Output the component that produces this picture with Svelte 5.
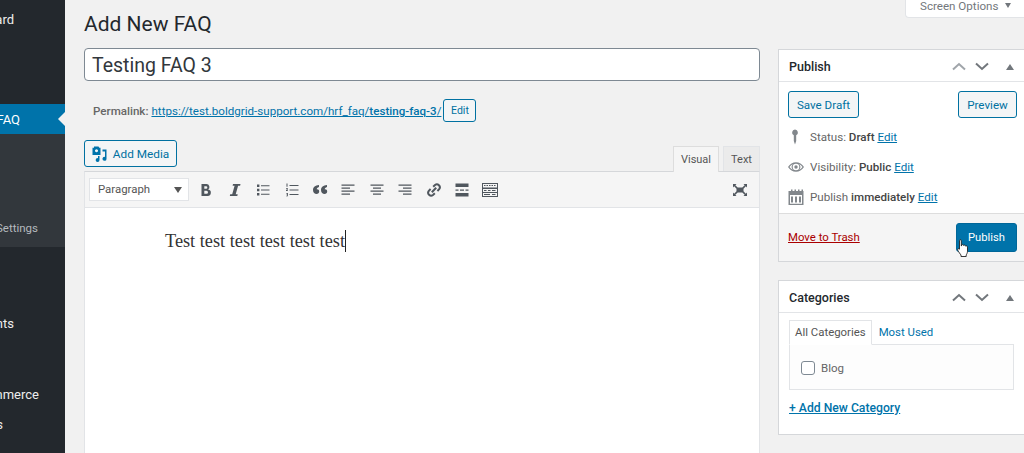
<script>
  // Icônes de la barre d'outils de l'éditeur
  const gras = 'M3.500 2h5a3 3 0 0 1 1.600 5.500 3.200 3.200 0 0 1-1.100 6.500H3.500zM6.300 4.200v2.500h1.800a1.250 1.250 0 0 0 0-2.500zM6.300 8.800v3h2.200a1.500 1.500 0 0 0 0-3z';
  const italique = 'M6 2h7.500l-.4 1.700h-2L8.700 12.300h2L10.300 14H2.800l.4-1.700h2L7.600 3.700h-2z';
</script>

<div class="page">
  <nav class="sidebar">
    <div class="item dash">Dashboard</div>
    <div class="item actif">FAQ<span class="fleche"></span></div>
    <div class="sous">
      <div class="item reglages">Settings</div>
    </div>
    <div class="item comments">Comments</div>
    <div class="item woo">WooCommerce</div>
    <div class="item produits">Products</div>
  </nav>

  <main class="contenu">
    <div class="colonne">
      <h1>Add New FAQ</h1>
      <div class="titre">Testing FAQ 3</div>
      <div class="permalien">
        <strong>Permalink:</strong>
        <a href="#p">https://test.boldgrid-support.com/hrf_faq/<b>testing-faq-3</b>/</a>
        <button class="btn petit">Edit</button>
      </div>
      <div class="barre-media">
        <button class="btn media">
          <svg width="15" height="16" viewBox="0 0 15 16"><path fill="#0073aa" fill-rule="evenodd" d="M2 .5h4.500l.8 1.200h1.200v7.300H.5V1.700H2zM4.500 3.300a1.500 1.500 0 1 0 .01 0zM10.500 3.500h4v9.300a2 2 0 1 1-1.500-1.900V5.500h-2.500zM7.500 10v4a1.900 1.900 0 1 1-1.500-1.800V10z"/></svg>
          Add Media
        </button>
        <div class="onglets">
          <span class="onglet on">Visual</span>
          <span class="onglet autre">Text</span>
        </div>
      </div>
      <div class="editeur">
        <div class="outils">
          <div class="select">Paragraph<i></i></div>
          <svg class="ico premier" viewBox="0 0 16 16"><path d={gras} fill-rule="evenodd"/></svg>
          <svg class="ico" viewBox="0 0 16 16"><path d={italique}/></svg>
          <svg class="ico" viewBox="0 0 16 16"><path d="M2 2.500h2.400v2.400H2zM2 6.800h2.400v2.400H2zM2 11.100h2.400v2.400H2zM6 3.200h8.500v1H6zM6 7.500h8.500v1H6zM6 11.800h8.500v1H6z"/></svg>
          <svg class="ico" viewBox="0 0 16 16"><path d="M5.500 3h9v.900h-9zM5.500 7.500h9v.900h-9zM5.500 12h9v.900h-9zM2.500 1.500h1v3.200h-1zM2 6.300h2v.7l-1 1.200h1v.7H2v-.7l1.100-1.200H2zM2 11h2v3.300H2v-.6h1.200v-.7H2.500v-.6h.7v-.8H2z"/></svg>
          <svg class="ico" viewBox="0 0 16 16"><path d="M7 3v1.900C5.400 5.300 4.700 6.300 4.700 7.300c1.400-.2 2.500.7 2.500 2.200 0 1.400-1.100 2.500-2.600 2.500C2.700 12 1 10.600 1 8c0-2.900 2.300-4.800 6-5zM15 3v1.900c-1.600.4-2.300 1.400-2.300 2.400 1.400-.2 2.500.7 2.500 2.200 0 1.400-1.100 2.500-2.600 2.500-1.900 0-3.600-1.400-3.600-4 0-2.900 2.300-4.800 6-5z"/></svg>
          <svg class="ico" viewBox="0 0 16 16"><path d="M1.500 2.500h13v1.300h-13zM1.500 5.500h8.500v1.300H1.500zM1.500 8.500h13v1.300h-13zM1.500 11.500h8.500v1.300H1.500z"/></svg>
          <svg class="ico" viewBox="0 0 16 16"><path d="M1.500 2.500h13v1.300h-13zM4 5.500h8v1.300H4zM1.500 8.500h13v1.300h-13zM4 11.500h8v1.300H4z"/></svg>
          <svg class="ico" viewBox="0 0 16 16"><path d="M1.500 2.500h13v1.300h-13zM6 5.500h8.500v1.300H6zM1.500 8.500h13v1.300h-13zM6 11.500h8.500v1.300H6z"/></svg>
          <svg class="ico trait" viewBox="0 0 16 16"><path d="M5.800 10.200l4.400-4.400"/><path d="M7.200 4.800L9 3a3 3 0 0 1 4.200 4.200L11.400 9"/><path d="M8.800 11.200L7 13a3 3 0 0 1-4.200-4.200L4.600 7"/></svg>
          <svg class="ico" viewBox="0 0 16 16"><path d="M1.500 1.500h13v3.500h-13zM1.500 11h13v3.500h-13zM1.500 7.500h3v1.200h-3zM6 7.500h4v1.200H6zM11.500 7.500h3v1.200h-3z"/></svg>
          <svg class="ico large" viewBox="0 0 18 16"><path fill-rule="evenodd" d="M1 1h16v14H1zM2 2v3.500h14V2zM2 7v3h14V7zM2 11v3h14v-3zM3 3h1.500v1H3zM5.500 3H7v1H5.500zM8 3h1.500v1H8zM10.500 3H12v1h-1.500zM13 3h1.500v1H13zM3 8h2.500v1H3zM7 8h2.500v1H7zM11 8h3.500v1H11zM3 12h6v1H3zM11 12h3.500v1H11z"/></svg>
          <svg class="ico plein" viewBox="0 0 16 16"><path d="M1 2h3.500L3.300 3.200 5.700 5.500h4.600l2.400-2.300L11.500 2H15v3.500l-1.200-1.200-2.300 2.400v2.600l2.300 2.400L15 10.500V14h-3.500l1.200-1.200-2.400-2.300H5.700l-2.400 2.300L4.500 14H1v-3.500l1.200 1.200 2.300-2.400V6.700L2.200 4.300 1 5.500z"/></svg>
        </div>
        <div class="texte"><span>Test test test test test test</span><i class="caret"></i></div>
      </div>
    </div>

    <aside class="droite">
      <div class="options">Screen Options <i></i></div>
      <section class="boite publier">
        <header>
          <h2>Publish</h2>
          <svg class="chev" viewBox="0 0 14 9"><path d="M1 7.500l6-5.500 6 5.500" class="gris"/></svg>
          <svg class="chev" viewBox="0 0 14 9"><path d="M1 1.500l6 5.500 6-5.500"/></svg>
          <i class="replier"></i>
        </header>
        <div class="actions">
          <button class="btn">Save Draft</button>
          <button class="btn">Preview</button>
        </div>
        <div class="ligne">
          <svg width="16" height="18" viewBox="0 0 16 18"><path fill="#82878c" d="M7 1.500a3 3 0 0 1 1.200 5.700V13L7 16.500 5.800 13V7.200A3 3 0 0 1 7 1.500z"/></svg>
          <span>Status: <b>Draft</b> <a href="#s">Edit</a></span>
        </div>
        <div class="ligne">
          <svg width="16" height="18" viewBox="0 0 16 18"><path fill="#82878c" fill-rule="evenodd" d="M0 9c2-3.200 4.800-4.800 8-4.800S14 5.800 16 9c-2 3.200-4.800 4.800-8 4.800S2 12.200 0 9zm8-3.300a3.300 3.300 0 1 0 0 6.600 3.300 3.300 0 0 0 0-6.600zM1.500 9c1 1.300 2.100 2.300 3.400 3a4.500 4.500 0 0 1 0-6C3.600 6.700 2.500 7.700 1.500 9zm13 0c-1-1.300-2.100-2.300-3.400-3a4.500 4.500 0 0 1 0 6c1.300-.7 2.400-1.700 3.400-3z"/><circle cx="8" cy="9" r="1.700" fill="#82878c"/></svg>
          <span>Visibility: <b>Public</b> <a href="#v">Edit</a></span>
        </div>
        <div class="ligne">
          <svg width="16" height="18" viewBox="0 0 16 18"><path fill="#82878c" fill-rule="evenodd" d="M1 3h2V1.500h1.500V3h2V1.500H8V3h2V1.500h1.500V3h2V1.500H15V3h.5v14H.5V3zM2 7v8.800h12V7zM3 8.500h2v6H3zM7 8.500h2v6H7zM11 8.500h2v6h-2z"/></svg>
          <span>Publish <b>immediately</b> <a href="#i">Edit</a></span>
        </div>
        <footer>
          <a class="corbeille" href="#t">Move to Trash</a>
          <button class="btn primaire">Publish</button>
          <svg class="main" width="15" height="20" viewBox="0 0 15 20"><path fill="#fff" stroke="#222" stroke-width=".9" d="M4 1.500c.8 0 1.300.6 1.300 1.300V8l.3-.1V6.800c.9-.6 1.900-.3 2 .6.800-.6 1.800-.3 2 .7.900-.5 1.900-.1 1.900 1v4.100c0 1.800-.9 3-1.300 3.800v1.500H5v-1.500c-.8-1-2.300-2.900-3.200-4.700-.6-1.100.4-2.100 1.400-1.400l.3.300V2.800c0-.7.500-1.300.5-1.300z"/></svg>
        </footer>
      </section>

      <section class="boite categories">
        <header>
          <h2>Categories</h2>
          <svg class="chev" viewBox="0 0 14 9"><path d="M1 7.500l6-5.500 6 5.500"/></svg>
          <svg class="chev" viewBox="0 0 14 9"><path d="M1 1.500l6 5.500 6-5.500"/></svg>
          <i class="replier"></i>
        </header>
        <div class="corps">
          <div class="cat-onglets">
            <span class="cat-on">All Categories</span>
            <a href="#m">Most Used</a>
          </div>
          <div class="cat-liste">
            <label><span class="coche"></span>Blog</label>
          </div>
          <a class="ajout" href="#n">+ Add New Category</a>
        </div>
      </section>
    </aside>
  </main>
</div>

<style>
  :global(body) {
    margin: 0;
    background: #f1f1f1;
  }

  .page {
    display: flex;
    width: 1024px;
    height: 453px;
    overflow: hidden;
    font-family: Roboto, "Open Sans", sans-serif;
    color: #444;
    font-size: 12px;
  }

  a { color: #0073aa; }

  /* === Barre latérale === */
  .sidebar {
    flex: 0 0 65px;
    background: #23282d;
    color: #eee;
    overflow: hidden;
    display: flex;
    flex-direction: column;
  }
  .item {
    display: flex;
    justify-content: flex-end;
    align-items: center;
    white-space: nowrap;
    height: 30px;
    font-size: 13px;
    position: relative;
  }
  .dash { margin-top: 4px; padding-right: 51px; }
  .actif {
    margin-top: 70px;
    background: #0073aa;
    color: #fff;
    padding-right: 45px;
  }
  .fleche {
    position: absolute;
    right: 0;
    top: 8px;
    border: 7px solid transparent;
    border-right-color: #f1f1f1;
    border-left-width: 0;
  }
  .sous {
    background: #32373c;
    height: 113px;
    display: flex;
    flex-direction: column;
    padding-top: 79px;
    box-sizing: border-box;
    color: #b4b9be;
  }
  .reglages { padding-right: 27px; height: 30px; font-size: 11.500px; }
  .comments { margin-top: 61px; padding-right: 51px; }
  .woo { margin-top: 41px; padding-right: 26px; }
  .produits { margin-top: 0; padding-right: 62px; }

  /* === Colonne principale === */
  .contenu {
    flex: 1;
    display: flex;
    padding-left: 19px;
    min-width: 0;
  }
  .colonne {
    width: 676px;
    flex: none;
  }
  h1 {
    margin: 11px 0 0;
    font-size: 21px;
    font-weight: 400;
    line-height: 27px;
    color: #23282d;
  }
  .titre {
    margin-top: 10px;
    height: 33px;
    box-sizing: border-box;
    border: 1px solid #7e8993;
    border-radius: 4px;
    background: #fff;
    padding: 2px 0 0 7px;
    font-size: 19.500px;
    line-height: 29px;
    color: #32373c;
  }
  .permalien {
    margin-top: 18px;
    padding-left: 9px;
    display: flex;
    align-items: center;
    gap: 3px;
    height: 23px;
    font-size: 11.600px;
    color: #666;
  }
  .permalien strong { font-weight: 500; }
  .permalien b { font-weight: 500; }
  .btn {
    font-family: inherit;
    font-size: 11.600px;
    color: #0071a1;
    background: #f3f5f6;
    border: 1px solid #0071a1;
    border-radius: 3px;
    padding: 0;
    display: inline-flex;
    align-items: center;
    justify-content: center;
    box-sizing: border-box;
  }
  .petit { width: 33px; height: 23px; font-size: 10.500px; margin-left: -1px; }
  .barre-media {
    margin-top: 18px;
    display: flex;
    justify-content: space-between;
    align-items: flex-end;
    height: 31px;
  }
  .media {
    width: 93px;
    height: 27px;
    gap: 6px;
    margin-bottom: 4px;
    font-size: 11.800px;
  }
  .onglets { display: flex; gap: 4px; position: relative; }
  .onglet {
    height: 25px;
    box-sizing: border-box;
    border: 1px solid #e2e4e7;
    border-bottom: none;
    background: #ebebeb;
    line-height: 25px;
    font-size: 11px;
    color: #555;
    text-align: center;
  }
  .onglet.on {
    background: #f5f5f5;
    border-color: #ddd;
    width: 46px;
    height: 26px;
    margin-bottom: -1px;
  }
  .onglet.autre { width: 37px; }
  .editeur {
    border: 1px solid #e2e4e7;
    border-top-color: #d5d7da;
    background: #fff;
    height: 300px;
  }
  .outils {
    height: 36px;
    box-sizing: border-box;
    background: #f5f5f5;
    border-bottom: 1px solid #e2e4e7;
    display: flex;
    align-items: center;
    padding-left: 4px;
    gap: 12.400px;
  }
  .select {
    width: 100px;
    height: 23px;
    box-sizing: border-box;
    background: #fff;
    border: 1px solid #e2e4e7;
    padding-left: 8px;
    line-height: 21px;
    font-size: 11.400px;
    color: #555;
    position: relative;
  }
  .select i {
    position: absolute;
    right: 6px;
    top: 8px;
    border: 4px solid transparent;
    border-top: 6px solid #555;
    border-bottom: none;
  }
  .ico {
    width: 16px;
    height: 16px;
    fill: #50575e;
    flex: none;
  }
  .ico.premier { margin-left: -3px; }
  .ico.trait { fill: none; stroke: #50575e; stroke-width: 2; }
  .ico.large { width: 18px; margin-left: -1px; }
  .plein { margin-left: auto; margin-right: 11px; }
  .texte {
    padding: 22px 0 0 80px;
    font-family: "Liberation Serif", serif;
    font-size: 18.300px;
    line-height: 22px;
    color: #333;
    display: flex;
  }
  .caret {
    width: 1px;
    height: 22px;
    background: #222;
  }

  /* === Colonne droite === */
  .droite {
    width: 246px;
    flex: none;
    margin-left: 18px;
    position: relative;
    padding-top: 49px;
    display: flex;
    flex-direction: column;
    gap: 18px;
  }
  .options {
    position: absolute;
    top: 0;
    left: 127px;
    width: 140px;
    height: 18px;
    box-sizing: border-box;
    background: #fff;
    border: 1px solid #e2e4e7;
    border-top: none;
    border-radius: 0 0 0 4px;
    padding-left: 14px;
    font-size: 11.600px;
    line-height: 12px;
    color: #72777c;
  }
  .options i {
    display: inline-block;
    margin-left: 4px;
    border: 3.500px solid transparent;
    border-top: 5px solid #72777c;
    border-bottom: none;
    vertical-align: 2px;
  }
  .boite {
    background: #fff;
    border: 1px solid #d5d7da;
    border-right: none;
    box-sizing: border-box;
  }
  .boite header {
    height: 32px;
    box-sizing: border-box;
    border-bottom: 1px solid #e2e4e7;
    display: flex;
    align-items: center;
    padding: 2px 0 0 10px;
  }
  h2 {
    flex: 1;
    margin: 0;
    font-size: 12.500px;
    font-weight: 500;
    color: #23282d;
  }
  .chev {
    width: 14px;
    height: 9px;
    fill: none;
    margin-right: 9px;
  }
  .chev path { stroke: #72777c; stroke-width: 2; }
  .chev path.gris { stroke: #a0a5aa; }
  .replier {
    margin: 0 10px 0 8px;
    border: 4px solid transparent;
    border-bottom: 6px solid #72777c;
    border-top: none;
  }
  .publier { height: 213px; display: flex; flex-direction: column; }
  .actions {
    display: flex;
    justify-content: space-between;
    padding: 9px 7px 4px 9px;
    height: 27px;
    flex: none;
  }
  .actions .btn { height: 27px; width: 71px; }
  .actions .btn:last-child { width: 59px; }
  .ligne {
    display: flex;
    align-items: center;
    flex: none;
    height: 30px;
    padding-left: 9px;
    gap: 6px;
    font-size: 11.600px;
    color: #666;
  }
  .ligne b { font-weight: 500; color: #444; }
  footer {
    margin-top: auto;
    height: 48px;
    flex: none;
    box-sizing: border-box;
    background: #f5f5f5;
    border-top: 1px solid #ddd;
    display: flex;
    justify-content: space-between;
    align-items: center;
    padding: 0 7px 0 9px;
    position: relative;
  }
  .corbeille { color: #a00; font-size: 11.400px; margin-bottom: 2px; }
  .primaire {
    width: 61px;
    height: 29px;
    background: #0073aa;
    border-color: #006799;
    color: #fff;
    font-size: 11.200px;
  }
  .main {
    position: absolute;
    left: 177px;
    top: 24px;
  }
  .categories { height: 155px; }
  .corps { padding: 7px 10px 0; }
  .cat-onglets {
    display: flex;
    align-items: flex-end;
    height: 25px;
    font-size: 11.400px;
    position: relative;
    z-index: 1;
  }
  .cat-onglets a { text-decoration: none; margin-left: 7px; line-height: 25px; }
  .cat-on {
    border: 1px solid #e2e4e7;
    border-bottom: 1px solid #fff;
    padding: 0 5px;
    line-height: 23px;
    color: #555;
  }
  .cat-liste {
    border: 1px solid #e2e4e7;
    background: #fdfdfd;
    height: 46px;
    box-sizing: border-box;
    margin: -1px 0 0;
    width: 225px;
    display: flex;
    align-items: center;
    padding: 2px 0 0 11px;
    font-size: 11.500px;
    color: #666;
  }
  .cat-liste label { display: flex; align-items: center; gap: 6px; }
  .coche {
    width: 12px;
    height: 12px;
    border: 1px solid #7e8993;
    border-radius: 3px;
    background: #fff;
    display: inline-block;
  }
  .ajout {
    display: block;
    margin-top: 11px;
    font-size: 12.200px;
    font-weight: 500;
  }
</style>
